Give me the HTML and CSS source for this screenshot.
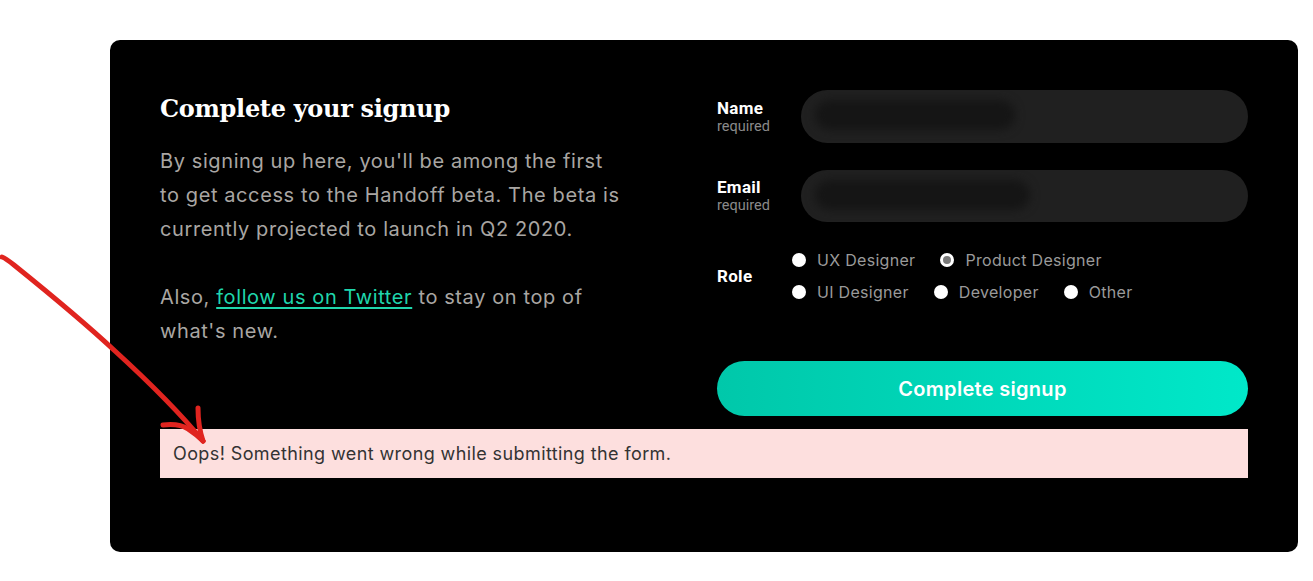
FILE: index.html
```html
<!DOCTYPE html>
<html lang="en">
<head>
<meta charset="utf-8">
<title>Complete your signup</title>
<link rel="stylesheet" href="styles.css">
</head>
<body>
<div class="card">
  <div class="grid">
    <div class="intro">
      <h1 class="title">Complete your signup</h1>
      <p class="copy">By signing up here, you'll be among the first to get access to the Handoff beta. The beta is currently projected to launch in Q2 2020.</p>
      <p class="copy">Also, <a class="link" href="#">follow us on Twitter</a> to stay on top of what's new.</p>
    </div>
    <form class="form">
      <div class="field">
        <div class="label"><span class="label-main">Name</span><span class="label-sub">required</span></div>
        <div class="input"><span class="blur blur-name"></span></div>
      </div>
      <div class="field">
        <div class="label"><span class="label-main">Email</span><span class="label-sub">required</span></div>
        <div class="input"><span class="blur blur-email"></span></div>
      </div>
      <div class="role">
        <div class="role-label">Role</div>
        <div class="options">
          <div class="opt-row">
            <label class="opt"><span class="radio"></span>UX Designer</label>
            <label class="opt"><span class="radio checked"></span>Product Designer</label>
          </div>
          <div class="opt-row">
            <label class="opt"><span class="radio"></span>UI Designer</label>
            <label class="opt"><span class="radio"></span>Developer</label>
            <label class="opt"><span class="radio"></span>Other</label>
          </div>
        </div>
      </div>
      <button class="submit" type="button">Complete signup</button>
    </form>
  </div>
  <div class="error">Oops! Something went wrong while submitting the form.</div>
</div>
<svg class="arrow" width="260" height="460" viewBox="0 0 260 460" aria-hidden="true">
  <path d="M2 257 C 5 258, 9 261, 14 265 C 50 294, 85 323, 115 351 C 150 383, 180 413, 203 441" fill="none" stroke="#e0241f" stroke-width="5" stroke-linecap="round" stroke-linejoin="round"/>
  <path d="M198 408 C 198 420, 200 432, 203 441" fill="none" stroke="#e0241f" stroke-width="5" stroke-linecap="round"/>
  <path d="M163 425 C 172 424, 182 425, 188 429 C 194 433, 199 437, 203 441" fill="none" stroke="#e0241f" stroke-width="5" stroke-linecap="round"/>
</svg>
</body>
</html>
```

FILE: styles.css
```css
html, body {
  margin: 0;
  padding: 0;
  background: #ffffff;
}

body {
  font-family: Inter, "Liberation Sans", sans-serif;
  width: 1313px;
  height: 581px;
  overflow: hidden;
  position: relative;
}

.card {
  margin: 40px 0 0 110px;
  width: 1188px;
  height: 512px;
  box-sizing: border-box;
  background: #000000;
  border-radius: 10px;
  padding: 50px 50px 0 50px;
}

.grid {
  display: grid;
  grid-template-columns: 557px 531px;
}

.title {
  margin: 2px 0 0 0;
  font-family: "DejaVu Serif", serif;
  font-weight: bold;
  font-size: 24px;
  line-height: 34px;
  color: #ffffff;
  letter-spacing: -0.3px;
}

.copy {
  margin: 18px 0 0 0;
  max-width: 465px;
  font-size: 20px;
  letter-spacing: 0.6px;
  line-height: 34px;
  color: #a9a6a3;
}

.copy + .copy {
  margin-top: 34px;
}

.link {
  color: #1fd6ac;
  text-decoration: underline;
  text-underline-offset: 3px;
  text-decoration-thickness: 1.5px;
}

.form {
  display: flex;
  flex-direction: column;
}

.field {
  display: flex;
  align-items: center;
  height: 53px;
  margin-bottom: 27px;
}

.field + .field {
  height: 52px;
  margin-bottom: 26px;
}

.label {
  width: 84px;
  display: flex;
  flex-direction: column;
  font-family: Roboto, "Liberation Sans", sans-serif;
}

.label-main {
  font-size: 17px;
  font-weight: bold;
  letter-spacing: 0.3px;
  color: #ffffff;
  line-height: 19px;
}

.label-sub {
  font-size: 14.5px;
  color: #8a8a8a;
  line-height: 17px;
}

.input {
  flex: 1;
  height: 100%;
  background: #202020;
  border-radius: 27px;
  position: relative;
  overflow: hidden;
}

.blur {
  position: absolute;
  top: 10px;
  left: 14px;
  height: 30px;
  border-radius: 15px;
  background: #151515;
  filter: blur(5px);
}

.blur-name { width: 200px; }
.blur-email { width: 215px; }

.role {
  display: flex;
  align-items: center;
}

.role-label {
  width: 75px;
  font-family: Roboto, "Liberation Sans", sans-serif;
  font-size: 17px;
  font-weight: bold;
  letter-spacing: 0.3px;
  color: #ffffff;
}

.options {
  display: flex;
  flex-direction: column;
  gap: 8px;
}

.opt-row {
  display: flex;
  gap: 25px;
}

.opt {
  display: flex;
  align-items: center;
  gap: 11px;
  font-size: 16px;
  letter-spacing: 0.3px;
  line-height: 24px;
  color: #9a9a9a;
}

.radio {
  width: 14px;
  height: 14px;
  border-radius: 50%;
  background: #ffffff;
  box-sizing: border-box;
}

.radio.checked {
  background: #7a7a7a;
  border: 3px solid #ffffff;
}

.submit {
  margin-top: 57px;
  height: 55px;
  border: 0;
  border-radius: 28px;
  background: linear-gradient(90deg, #00c8aa 0%, #00e8c9 100%);
  color: #ffffff;
  font-family: Inter, "Liberation Sans", sans-serif;
  font-size: 20px;
  letter-spacing: 0.3px;
  font-weight: 600;
  cursor: pointer;
}

.error {
  margin-top: 13px;
  height: 49px;
  box-sizing: border-box;
  padding: 0 13px;
  display: flex;
  align-items: center;
  background: #fddfde;
  color: #333333;
  font-size: 18px;
  letter-spacing: 0.4px;
}

.arrow {
  position: absolute;
  left: 0;
  top: 0;
  pointer-events: none;
}
```
